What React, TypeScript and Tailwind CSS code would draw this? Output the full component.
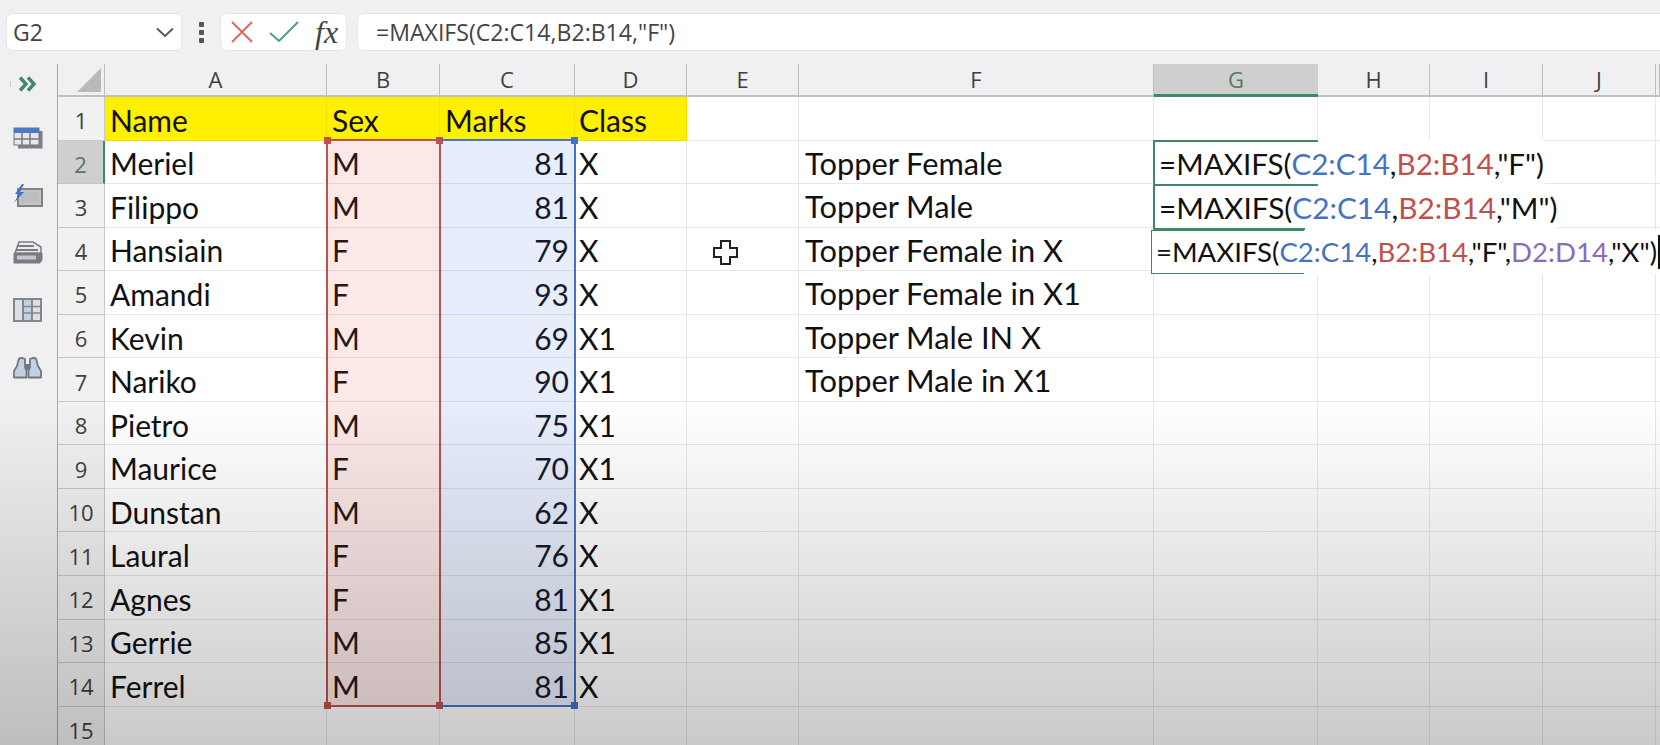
import React from "react";

const colLetters = ["A", "B", "C", "D", "E", "F", "G", "H", "I", "J", ""];
const colWidths = [222, 113, 135, 112, 112, 355, 164, 112, 113, 113, 4];

const data: [string, string, string, string][] = [
  ["Name", "Sex", "Marks", "Class"],
  ["Meriel", "M", "81", "X"],
  ["Filippo", "M", "81", "X"],
  ["Hansiain", "F", "79", "X"],
  ["Amandi", "F", "93", "X"],
  ["Kevin", "M", "69", "X1"],
  ["Nariko", "F", "90", "X1"],
  ["Pietro", "M", "75", "X1"],
  ["Maurice", "F", "70", "X1"],
  ["Dunstan", "M", "62", "X"],
  ["Laural", "F", "76", "X"],
  ["Agnes", "F", "81", "X1"],
  ["Gerrie", "M", "85", "X1"],
  ["Ferrel", "M", "81", "X"],
  ["", "", "", ""],
];

const topper: Record<number, string> = {
  2: "Topper Female",
  3: "Topper Male",
  4: "Topper Female in X",
  5: "Topper Female in X1",
  6: "Topper Male IN X",
  7: "Topper Male in X1",
};

const BLUE = "text-[#4472c4]";
const RED = "text-[#c0504d]";
const PURPLE = "text-[#8a6bb8]";

function Handle({ className }: { className: string }) {
  return <div className={"absolute h-[7px] w-[7px] " + className} />;
}

function Row({ n }: { n: number }) {
  const d = data[n - 1];
  const header = n === 1;
  return (
    <div className="flex h-[43.55px]">
      <div
        className={
          n === 2
            ? "flex w-[47px] shrink-0 items-center justify-center border-r-2 border-b border-r-[#3d8a62] border-b-[#c4c4c4] bg-[#cfcfcf] pt-[5px] font-['Open_Sans',sans-serif] text-[22px] text-[#4f7c66]"
            : "flex w-[47px] shrink-0 items-center justify-center border-r border-b border-r-[#c8c8c8] border-b-[#c8c8c8] bg-[#f1f1f2] pt-[5px] font-['Open_Sans',sans-serif] text-[22px] text-[#404040]"
        }
      >
        {n}
      </div>
      {colWidths.map((w, i) => {
        const yellow = header && i < 4;
        let txt = "";
        if (i < 4) txt = d[i];
        if (i === 5) txt = topper[n] || "";
        return (
          <div
            key={i}
            style={{ width: w }}
            className={
              (yellow ? "border-[#f0e000] bg-[#fff000] " : "border-[#e8e8e8] bg-white ") +
              (i === 2 && !header ? "justify-end pr-[5px] " : i === 3 ? "pl-[4px] " : i === 5 ? "pl-[6px] " : "pl-[5px] ") +
              (i === 5 ? "text-[30.8px] " : "text-[30px] ") +
              "flex shrink-0 items-center overflow-hidden border-r border-b pt-[4px] font-['Lato',sans-serif] whitespace-nowrap text-[#111]"
            }
          >
            {txt}
          </div>
        );
      })}
    </div>
  );
}

export default function App() {
  return (
    <div className="relative h-[745px] w-[1660px] overflow-hidden bg-[#f0f0f2]">
      {/* formula bar */}
      <div className="flex h-[64px] items-start pt-[13px] pl-[6px]">
        <div className="flex h-[38px] w-[176px] items-center justify-between rounded-[7px] border border-[#e6e6e6] bg-white pr-[7px] pl-[6px] font-['Open_Sans',sans-serif] text-[23px] text-[#444]">
          <span>G2</span>
          <svg width="18" height="11" viewBox="0 0 18 11" fill="none" stroke="#555" strokeWidth="1.8">
            <path d="M1 1.5 L9 9 L17 1.5" />
          </svg>
        </div>
        <div className="flex h-[38px] w-[38px] flex-col items-center justify-center gap-[3px]">
          <div className="h-[5px] w-[5px] rounded-[1px] bg-[#555]" />
          <div className="h-[5px] w-[5px] rounded-[1px] bg-[#555]" />
          <div className="h-[5px] w-[5px] rounded-[1px] bg-[#555]" />
        </div>
        <div className="flex h-[38px] w-[127px] items-center rounded-[7px] border border-[#e6e6e6] bg-white pl-[10px]">
          <svg width="22" height="22" viewBox="0 0 22 22" fill="none" stroke="#e2675f" strokeWidth="2">
            <path d="M1 1 L21 21 M21 1 L1 21" />
          </svg>
          <svg className="ml-[16px]" width="30" height="22" viewBox="0 0 30 22" fill="none" stroke="#4f9e75" strokeWidth="2">
            <path d="M1 12 L10 20 L29 1" />
          </svg>
          <span className="ml-[16px] font-['Liberation_Serif',serif] text-[32px] leading-none text-[#444] italic">fx</span>
        </div>
        <div className="ml-[10px] flex h-[38px] grow items-center rounded-l-[7px] border border-r-0 border-[#e6e6e6] bg-white pl-[18px] font-['Open_Sans',sans-serif] text-[23.1px] text-[#444]">
          =MAXIFS(C2:C14,B2:B14,"F")
        </div>
      </div>

      <div className="flex">
        {/* left tool strip */}
        <div className="flex w-[57px] shrink-0 flex-col items-start pl-[13px]">
          <div className="relative flex h-[40px] items-center">
            <div className="absolute top-[17px] left-[-3px] h-[6px] w-[1px] bg-[#d0d0d0]" />
            <svg width="20" height="16" viewBox="0 0 20 16" className="ml-[5px]" fill="none" stroke="#3f8a68" strokeWidth="3.4">
              <path d="M2 1.5 L8 8 L2 14.5 M10 1.5 L16 8 L10 14.5" />
            </svg>
          </div>
          <div className="mt-[5px] flex h-[57.5px] items-center">
            <svg width="30" height="22" viewBox="0 0 30 22">
              <path d="M25 4 H29.5 V21.5 H5 V18 H25 Z" fill="#7d7f85" />
              <rect x="1" y="1" width="25" height="17" fill="#e6e6e8" stroke="#77797f" />
              <rect x="1" y="1" width="25" height="5" fill="#4a78c2" />
              <path d="M9 6 V18 M17 6 V18 M1 12 H26" stroke="#77797f" strokeWidth="1.5" />
            </svg>
          </div>
          <div className="flex h-[57.5px] items-center">
            <svg width="30" height="23" viewBox="0 0 30 23">
              <rect x="5" y="5" width="24" height="17" fill="#c4c4c6" stroke="#808286" strokeWidth="2" />
              <rect x="8" y="8" width="18" height="11" fill="#bdbdbf" />
              <path d="M9 0 L2 10 H6 L1 19 L11 8 H7 L11 0 Z" fill="#3e75cc" />
            </svg>
          </div>
          <div className="flex h-[57.5px] items-center">
            <svg width="30" height="23" viewBox="0 0 30 23">
              <path d="M6 1 H20 L28 6 V12 H2 Z" fill="#eceded" stroke="#7a7c82" strokeWidth="1.5" />
              <path d="M4 5 H21 M3 9 H25" stroke="#7a7c82" strokeWidth="2" />
              <path d="M0.5 12 H29.5 V19 L27 22.5 H0.5 Z" fill="#7a7c82" />
              <rect x="4" y="14.5" width="19" height="4" fill="#c3c7d2" />
            </svg>
          </div>
          <div className="flex h-[57.5px] items-center">
            <svg width="29" height="24" viewBox="0 0 29 24">
              <rect x="0" y="0" width="29" height="24" fill="#85878b" />
              <rect x="2" y="2" width="7" height="20" fill="#dcdfe6" />
              <rect x="11" y="2" width="7" height="20" fill="#c3d0e4" />
              <rect x="20" y="2" width="7" height="20" fill="#dcdfe6" />
              <path d="M11 8.5 H18 M11 15 H18 M20 8.5 H27 M20 15 H27" stroke="#85878b" strokeWidth="1.6" />
            </svg>
          </div>
          <div className="flex h-[57.5px] items-center">
            <svg width="29" height="22" viewBox="0 0 29 22">
              <path d="M6 1.5 L9 0.8 L12 2 V10 L13.5 14 V20.5 H1 V14 L4 9 Z" fill="#c2d0e4" stroke="#74767c" strokeWidth="1.8" strokeLinejoin="round" />
              <path d="M23 1.5 L20 0.8 L17 2 V10 L15.5 14 V20.5 H28 V14 L25 9 Z" fill="#c2d0e4" stroke="#74767c" strokeWidth="1.8" strokeLinejoin="round" />
              <rect x="12" y="7" width="5" height="6" fill="#74767c" />
            </svg>
          </div>
        </div>

        {/* sheet */}
        <div className="shrink-0 border-l border-[#a8a8a8]">
          {/* column header */}
          <div className="flex h-[33px]">
            <div className="flex h-full w-[47px] shrink-0 items-center justify-end border-r border-b-2 border-r-[#bdbdbd] border-b-[#c0c0c0] bg-[#f0f0f2] pr-[3px]">
              <svg width="24" height="24" viewBox="0 0 24 24">
                <path d="M24 0 V24 H0 Z" fill="#b9b9bb" />
              </svg>
            </div>
            {colWidths.map((w, i) => (
              <div
                key={i}
                style={{ width: w }}
                className={
                  (i === 6
                    ? "border-b-[3px] border-b-[#3d8a62] bg-[#cfcfcf] text-[#4f7c66] "
                    : "border-r border-b-2 border-r-[#bdbdbd] border-b-[#c0c0c0] bg-[#f0f0f2] text-[#404040] ") +
                  "flex h-full shrink-0 items-center justify-center font-['Open_Sans',sans-serif] text-[22px]"
                }
              >
                {colLetters[i]}
              </div>
            ))}
          </div>
          {data.map((_, i) => (
            <Row key={i} n={i + 1} />
          ))}
        </div>
      </div>

      {/* coloured range of column B */}
      <div className="absolute top-[139px] left-[326px] h-[568px] w-[115px] border-2 border-[#c0504d] bg-[#e0403a]/12">
        <Handle className="top-[-4px] left-[-4px] bg-[#c0504d]" />
        <Handle className="top-[-4px] right-[-4px] bg-[#c0504d]" />
        <Handle className="bottom-[-4px] left-[-4px] bg-[#c0504d]" />
        <Handle className="right-[-4px] bottom-[-4px] bg-[#c0504d]" />
      </div>
      {/* coloured range of column C */}
      <div className="absolute top-[139px] left-[441px] h-[568px] w-[135px] border-y-2 border-r-2 border-[#4472c4] bg-[#3a6fe0]/12">
        <Handle className="top-[-4px] right-[-4px] bg-[#4472c4]" />
        <Handle className="right-[-4px] bottom-[-4px] bg-[#4472c4]" />
      </div>

      {/* in-cell editors */}
      <div className="absolute top-[140px] left-[1154px] flex h-[46px] w-[390px] items-center bg-white pt-[2px] pl-[5px] font-['Lato',sans-serif] text-[29.6px] whitespace-nowrap text-[#111]">
        =MAXIFS(<span className={BLUE}>C2:C14</span>,<span className={RED}>B2:B14</span>,"F")
      </div>
      <div className="absolute top-[140px] left-[1153px] h-[46px] w-[165px] border-y-2 border-l-2 border-[#3d8a62]" />
      <div className="absolute top-[186px] left-[1154px] flex h-[44px] w-[403px] items-center bg-white pl-[5px] font-['Lato',sans-serif] text-[29.8px] whitespace-nowrap text-[#111]">
        =MAXIFS(<span className={BLUE}>C2:C14</span>,<span className={RED}>B2:B14</span>,"M")
      </div>
      <div className="absolute top-[186px] left-[1153px] h-[44px] w-[152px] border-b-2 border-l-2 border-[#3d8a62]" />
      <div className="absolute top-[230px] left-[1151px] flex h-[44px] w-[509px] items-center bg-white pl-[5px] font-['Lato',sans-serif] text-[27.6px] whitespace-nowrap text-[#111]">
        =MAXIFS(<span className={BLUE}>C2:C14</span>,<span className={RED}>B2:B14</span>,"F",<span className={PURPLE}>D2:D14</span>,"X")
        <span className="ml-[1px] h-[34px] w-[1.5px] bg-[#111]" />
      </div>
      <div className="absolute top-[230px] left-[1151px] h-[44px] w-[153px] border-y border-l border-[#3d8a62]" />

      {/* mouse cursor */}
      <svg className="absolute top-[240px] left-[713px]" width="25" height="25" viewBox="0 0 25 25">
        <path d="M8 1 H17 V8 H24 V17 H17 V24 H8 V17 H1 V8 H8 Z" fill="#fff" stroke="#222" strokeWidth="2" />
      </svg>

      {/* video darkening toward the bottom */}
      <div className="pointer-events-none absolute inset-x-0 bottom-0 h-[345px] bg-linear-to-b from-transparent to-black/21" />
    </div>
  );
}
